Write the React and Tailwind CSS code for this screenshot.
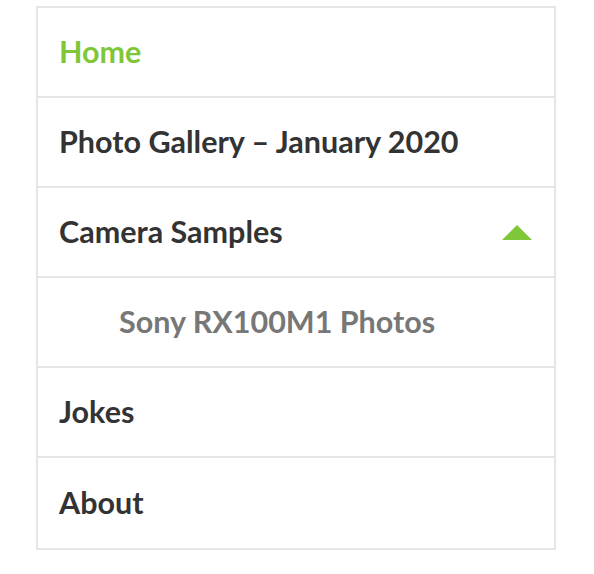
const ITEMS = [
  { label: 'Home', active: true },
  { label: 'Photo Gallery – January 2020' },
  { label: 'Camera Samples', open: true },
  { label: 'Sony RX100M1 Photos', sub: true },
  { label: 'Jokes' },
  { label: 'About' },
]

export default function App() {
  return (
    <div className="min-h-[574px] bg-white pt-[6px] pl-[36px]" style={{ fontFamily: 'Lato, "Open Sans", sans-serif' }}>
      <ul className="w-[520px] border-2 border-[#e6e6e6]">
        {ITEMS.map((item, i) => (
          <li
            key={item.label}
            className={`h-[90px] flex items-center justify-between pr-[22px] pb-[2px] ${
              i < ITEMS.length - 1 ? 'border-b-2 border-[#e6e6e6]' : 'h-[88px]'
            } ${item.sub ? 'pl-[81px]' : 'pl-[21px]'}`}
          >
            <span
              className={`text-[30.5px] leading-none font-bold ${
                item.active ? 'text-[#7fc739]' : item.sub ? 'text-[#777777]' : 'text-[#333333]'
              }`}
            >
              {item.label}
            </span>
            {item.open && (
              <svg width="30" height="15" viewBox="0 0 30 15" className="mt-[2px]">
                <path d="M15 0 L30 15 L0 15 Z" fill="#7fc739" />
              </svg>
            )}
          </li>
        ))}
      </ul>
    </div>
  )
}
